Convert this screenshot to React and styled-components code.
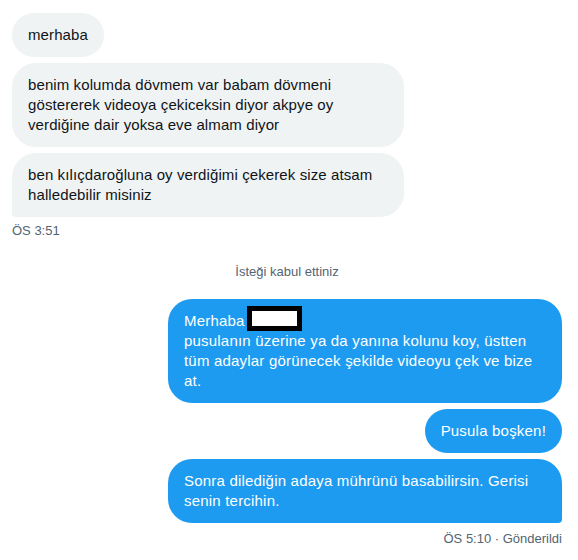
import React from 'react'
import styled, { createGlobalStyle } from 'styled-components'

const GlobalStyle = createGlobalStyle`
  html, body {
    margin: 0;
    padding: 0;
    background: #fff;
  }
  body {
    font-family: "Liberation Sans", "Segoe UI", Arial, sans-serif;
    color: #0f1419;
  }
`

const received = [
  'merhaba',
  'benim kolumda dövmem var babam dövmeni göstererek videoya çekiceksin diyor akpye oy verdiğine dair yoksa eve almam diyor',
  'ben kılıçdaroğluna oy verdiğimi çekerek size atsam halledebilir misiniz',
]

const sent = [
  'Pusula boşken!',
  'Sonra dilediğin adaya mührünü basabilirsin. Gerisi senin tercihin.',
]

function App() {
  return (
    <Page>
      <GlobalStyle />
      <Group>
        {received.map((text, i) => (
          <Bubble key={i} $tail={i === received.length - 1}>
            {text}
          </Bubble>
        ))}
      </Group>
      <Meta>ÖS 3:51</Meta>

      <Notice>İsteği kabul ettiniz</Notice>

      <Group $sent>
        <Bubble $sent>
          Merhaba<Redacted />
          <br />
          pusulanın üzerine ya da yanına kolunu koy, üstten tüm adaylar görünecek şekilde videoyu çek ve bize at.
        </Bubble>
        {sent.map((text, i) => (
          <Bubble key={i} $sent $tail={i === sent.length - 1}>
            {text}
          </Bubble>
        ))}
      </Group>
      <Meta $sent>ÖS 5:10 · Gönderildi</Meta>
    </Page>
  )
}

const Page = styled.div`
  width: 578px;
  min-height: 560px;
  box-sizing: border-box;
  padding: 13px 16px 0 12px;
  display: flex;
  flex-direction: column;
`

const Group = styled.div`
  display: flex;
  flex-direction: column;
  align-items: ${p => (p.$sent ? 'flex-end' : 'flex-start')};
  gap: 6px;
`

const Bubble = styled.div`
  max-width: ${p => (p.$sent ? '362px' : '360px')};
  padding: 12px 16px;
  border-radius: ${p =>
    p.$tail ? (p.$sent ? '24px 24px 4px 24px' : '24px 24px 24px 4px') : '24px'};
  background: ${p => (p.$sent ? '#1d9bf0' : '#eff3f4')};
  color: ${p => (p.$sent ? '#fff' : '#0f1419')};
  font-size: 15px;
  line-height: 20px;
  letter-spacing: ${p => (p.$sent ? '0.2px' : '0.1px')};
  overflow-wrap: break-word;
`

const Redacted = styled.span`
  display: inline-block;
  box-sizing: border-box;
  width: 55px;
  height: 25px;
  margin: -5px 0 0 2px;
  vertical-align: bottom;
  background: #fff;
  border: 5px solid #000;
`

const Meta = styled.div`
  align-self: ${p => (p.$sent ? 'flex-end' : 'flex-start')};
  margin-top: ${p => (p.$sent ? '8px' : '6px')};
  font-size: 13px;
  line-height: 16px;
  color: #536471;
`

const Notice = styled.div`
  align-self: center;
  margin: 25px 0 19px;
  font-size: 13px;
  line-height: 16px;
  color: #536471;
`

export default App
